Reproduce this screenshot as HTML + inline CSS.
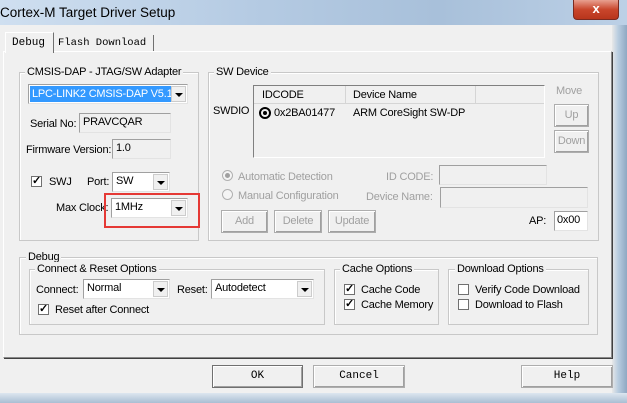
<!DOCTYPE html>
<html><head><meta charset="utf-8"><style>
body{margin:0;width:627px;height:403px;overflow:hidden;background:#f0f0f0;font-family:"Liberation Sans",sans-serif;font-size:11px;letter-spacing:-0.2px;color:#000;position:relative}
.a{position:absolute}
.t{position:absolute;white-space:nowrap;line-height:14px}
.g{position:absolute;border:1px solid #c8c8c8;box-shadow:inset 1px 1px 0 #fff}
.gl{position:absolute;background:#f0f0f0;padding:0 2px;line-height:14px;white-space:nowrap}
.f{position:absolute;border:1px solid #a0a0a0;border-right-color:#e3e3e3;border-bottom-color:#e3e3e3;background:#f0f0f0;box-sizing:border-box;padding-left:3px;line-height:17px;white-space:nowrap}
.w{background:#fff}
.dd{position:absolute;right:1px;top:1px;bottom:1px;width:15px;background:#f0f0f0;border:1px solid #ccc;box-sizing:border-box}
.dd:after{content:"";position:absolute;left:3px;top:6px;border:4px solid transparent;border-top:4px solid #000;border-bottom:0}
.b{position:absolute;border:1px solid #adadad;background:#f0f0f0;box-shadow:inset 1px 1px 0 #fff,inset -1px -1px 0 #a0a0a0;box-sizing:border-box;text-align:center;color:#a0a0a0;line-height:20px}
.cb{position:absolute;width:11px;height:11px;border:1px solid #707070;background:#fff;box-sizing:border-box;font-size:11px;line-height:9px;text-align:center;font-weight:bold;letter-spacing:0}
.gray{color:#a0a0a0}
.mb{position:absolute;border:1px solid #707070;background:#f0f0f0;box-shadow:inset 1px 1px 0 #fff,inset -1px -1px 0 #a0a0a0;box-sizing:border-box;text-align:center;font-family:"Liberation Mono",monospace;font-size:11px;line-height:21px;letter-spacing:0}
</style></head><body>
<div class="a" style="left:0;top:0;width:627px;height:25px;background:linear-gradient(90deg,#cfdff0,#b5cbe3 40%,#a8c0da 70%,#bcd0e6)"></div>
<div class="t" style="left:0;top:4px;font-size:13.5px;line-height:17px;color:#000;letter-spacing:0">Cortex-M Target Driver Setup</div>
<div class="a" style="left:573px;top:0;width:46px;height:20px;background:linear-gradient(#e8a090,#c9462c 50%,#b8351c);border:1px solid #7a2a20;border-top:0;border-radius:0 0 4px 4px;box-sizing:border-box;color:#fff;text-align:center;font-weight:bold;font-size:13px;line-height:17px">x</div>
<div class="a" style="left:612px;top:25px;width:15px;height:378px;background:linear-gradient(90deg,#e8e8e8,#b9cde0 40%,#8fa8c2)"></div>
<div class="a" style="left:0;top:393px;width:627px;height:10px;background:linear-gradient(#dde6ef,#a9bed3)"></div>
<div class="a" style="left:3px;top:51px;width:607px;height:305px;border:1px solid #8a8a8a;border-top-color:#fff;border-left-color:#fff;box-shadow:1px 1px 0 #404040"></div>
<div class="a" style="left:5px;top:32px;width:49px;height:21px;border:1px solid #fff;border-bottom:0;border-right:1px solid #707070;background:#f0f0f0;font-family:'Liberation Mono',monospace;font-size:11px;line-height:20px;padding-left:6px;box-sizing:border-box;letter-spacing:0">Debug</div>
<div class="a" style="left:55px;top:35px;width:95px;height:16px;border-right:1px solid #707070;font-family:'Liberation Mono',monospace;font-size:10.5px;line-height:16px;padding-left:3px;letter-spacing:0">Flash Download</div>
<div class="g" style="left:19px;top:72px;width:178px;height:167px"></div>
<div class="gl" style="left:25px;top:65px">CMSIS-DAP - JTAG/SW Adapter</div>
<div class="f w" style="left:28px;top:84px;width:160px;height:20px;padding:1px"><div style="background:#3399ff;color:#fff;width:142px;line-height:16px;padding-left:2px;overflow:hidden;white-space:nowrap">LPC-LINK2 CMSIS-DAP V5.1</div><div class="dd"></div></div>
<div class="t" style="left:30px;top:117px">Serial No:</div>
<div class="f" style="left:79px;top:113px;width:92px;height:20px">PRAVCQAR</div>
<div class="t" style="left:26px;top:143px">Firmware Version:</div>
<div class="f" style="left:112px;top:139px;width:59px;height:20px">1.0</div>
<div class="cb" style="left:31px;top:176px">✓</div>
<div class="t" style="left:49px;top:175px">SWJ</div>
<div class="t" style="left:87px;top:175px">Port:</div>
<div class="f w" style="left:112px;top:172px;width:58px;height:20px">SW<div class="dd"></div></div>
<div class="t" style="left:56px;top:201px">Max Clock:</div>
<div class="f w" style="left:111px;top:198px;width:77px;height:20px">1MHz<div class="dd"></div></div>
<div class="a" style="left:104px;top:193px;width:96px;height:35px;border:2px solid #e53935;box-sizing:border-box"></div>
<div class="g" style="left:208px;top:72px;width:389px;height:167px"></div>
<div class="gl" style="left:214px;top:65px">SW Device</div>
<div class="t" style="left:213px;top:104px">SWDIO</div>
<div class="a" style="left:253px;top:85px;width:292px;height:73px;border:1px solid #808080;border-right-color:#fff;border-bottom-color:#fff;box-sizing:border-box;background:#f0f0f0">
 <div class="a" style="left:0;top:0;width:290px;height:17px;border-bottom:1px solid #d5d5d5"></div>
 <div class="a" style="left:91px;top:0;height:17px;border-left:1px solid #d5d5d5"></div>
 <div class="a" style="left:221px;top:0;height:17px;border-left:1px solid #d5d5d5"></div>
 <div class="t" style="left:8px;top:2px">IDCODE</div>
 <div class="t" style="left:99px;top:2px">Device Name</div>
 <div class="a" style="left:5px;top:21px;width:8px;height:8px;border:2px solid #000;border-radius:50%"><div class="a" style="left:2px;top:2px;width:4px;height:4px;background:#000;border-radius:50%"></div></div>
 <div class="t" style="left:20px;top:20px">0x2BA01477</div>
 <div class="t" style="left:99px;top:20px">ARM CoreSight SW-DP</div>
</div>
<div class="t gray" style="left:556px;top:84px">Move</div>
<div class="b" style="left:554px;top:104px;width:35px;height:23px">Up</div>
<div class="b" style="left:554px;top:130px;width:35px;height:23px">Down</div>
<div class="a" style="left:222px;top:170px;width:9px;height:9px;border:1px solid #b0b0b0;border-radius:50%;background:#f4f4f4"><div class="a" style="left:2px;top:2px;width:5px;height:5px;background:#a0a0a0;border-radius:50%"></div></div>
<div class="t gray" style="left:238px;top:170px">Automatic Detection</div>
<div class="a" style="left:222px;top:189px;width:9px;height:9px;border:1px solid #b0b0b0;border-radius:50%;background:#f4f4f4"></div>
<div class="t gray" style="left:238px;top:189px">Manual Configuration</div>
<div class="t gray" style="left:386px;top:170px">ID CODE:</div>
<div class="f" style="left:439px;top:165px;width:108px;height:20px"></div>
<div class="t gray" style="left:366px;top:190px">Device Name:</div>
<div class="f" style="left:440px;top:187px;width:148px;height:21px"></div>
<div class="b" style="left:221px;top:210px;width:47px;height:23px">Add</div>
<div class="b" style="left:274px;top:210px;width:48px;height:23px">Delete</div>
<div class="b" style="left:328px;top:210px;width:48px;height:23px">Update</div>
<div class="t" style="left:529px;top:214px">AP:</div>
<div class="f w" style="left:554px;top:211px;width:34px;height:20px;padding-left:2px">0x00</div>
<div class="g" style="left:19px;top:257px;width:577px;height:76px"></div>
<div class="gl" style="left:26px;top:250px">Debug</div>
<div class="g" style="left:29px;top:269px;width:294px;height:54px"></div>
<div class="gl" style="left:35px;top:262px">Connect &amp; Reset Options</div>
<div class="t" style="left:36px;top:283px">Connect:</div>
<div class="f w" style="left:83px;top:279px;width:87px;height:20px">Normal<div class="dd"></div></div>
<div class="t" style="left:177px;top:283px">Reset:</div>
<div class="f w" style="left:211px;top:279px;width:103px;height:20px">Autodetect<div class="dd"></div></div>
<div class="cb" style="left:38px;top:304px">✓</div>
<div class="t" style="left:55px;top:303px">Reset after Connect</div>
<div class="g" style="left:334px;top:269px;width:103px;height:54px"></div>
<div class="gl" style="left:340px;top:262px">Cache Options</div>
<div class="cb" style="left:344px;top:284px">✓</div>
<div class="t" style="left:361px;top:283px">Cache Code</div>
<div class="cb" style="left:344px;top:299px">✓</div>
<div class="t" style="left:361px;top:298px">Cache Memory</div>
<div class="g" style="left:448px;top:269px;width:139px;height:54px"></div>
<div class="gl" style="left:455px;top:262px">Download Options</div>
<div class="cb" style="left:458px;top:284px"></div>
<div class="t" style="left:475px;top:283px">Verify Code Download</div>
<div class="cb" style="left:458px;top:299px"></div>
<div class="t" style="left:475px;top:298px">Download to Flash</div>
<div class="mb" style="left:212px;top:365px;width:91px;height:23px">OK</div>
<div class="mb" style="left:313px;top:365px;width:92px;height:23px;border-color:#adadad">Cancel</div>
<div class="mb" style="left:521px;top:365px;width:92px;height:23px;border-color:#adadad">Help</div>
</body></html>
